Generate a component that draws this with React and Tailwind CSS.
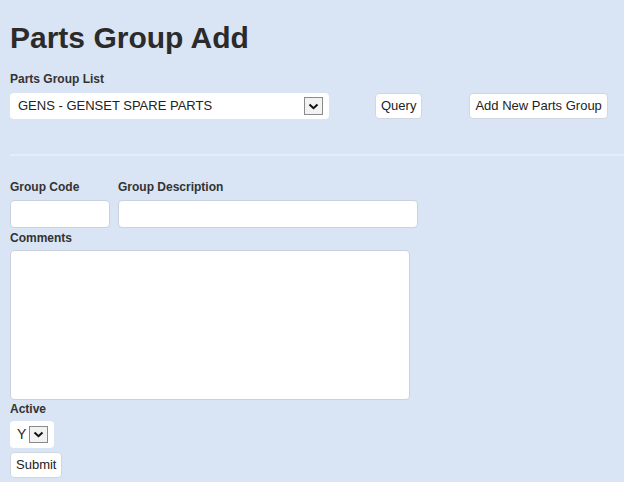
import React from "react";

function Arrow({ className }) {
  return (
    <span className={"inline-flex items-center justify-center border border-[#8a8a8a] bg-[#f2f2f2] " + className}>
      <svg width="11" height="7" viewBox="0 0 11 7">
        <path d="M1.5 1.5 L5.5 5.2 L9.5 1.5" fill="none" stroke="#111" strokeWidth="2" />
      </svg>
    </span>
  );
}

export default function App() {
  return (
    <div className="min-h-[482px] w-[624px] bg-[#d9e4f4] text-[#333] font-['Liberation_Sans',Arial,sans-serif] px-[10px] pt-[18px] overflow-hidden">
      <h1 className="text-[30px] font-bold leading-[40px] text-[#2b2b2b]">Parts Group Add</h1>
      <div className="mt-[14px] text-[12px] font-bold leading-[14px]">Parts Group List</div>
      <div className="mt-[7px] flex items-center h-[26px]">
        <div className="w-[319px] h-[26px] bg-white rounded-[4px] flex items-center pl-[8px] pr-[6px] justify-between">
          <span className="text-[13px] text-[#222]">GENS - GENSET SPARE PARTS</span>
          <Arrow className="w-[19px] h-[18px]" />
        </div>
        <button className="ml-[46px] h-[26px] px-[5px] bg-white rounded-[4px] border border-[#d0d7e0] text-[13px] text-[#222]">Query</button>
        <button className="ml-[47px] h-[26px] px-[5px] bg-white rounded-[4px] border border-[#d0d7e0] text-[13px] text-[#222]">Add New Parts Group</button>
      </div>
      <div className="mt-[35px] -mr-[10px] h-[2px] bg-[#e6edf8]" />
      <div className="mt-[24px] flex gap-[8px]">
        <div className="w-[100px]">
          <div className="text-[12px] font-bold leading-[14px]">Group Code</div>
          <div className="mt-[6px] h-[28px] bg-white rounded-[4px] border border-[#c9d1dc]" />
        </div>
        <div className="w-[300px]">
          <div className="text-[12px] font-bold leading-[14px]">Group Description</div>
          <div className="mt-[6px] h-[28px] bg-white rounded-[4px] border border-[#c9d1dc]" />
        </div>
      </div>
      <div className="mt-[3px] text-[12px] font-bold leading-[14px]">Comments</div>
      <div className="mt-[5px] w-[400px] h-[150px] bg-white rounded-[4px] border border-[#c9d1dc]" />
      <div className="mt-[2px] text-[12px] font-bold leading-[14px]">Active</div>
      <div className="mt-[5px] w-[44px] h-[27px] bg-white rounded-[4px] flex items-center pl-[7px]">
        <span className="text-[14px] text-[#222]">Y</span>
        <Arrow className="ml-[3px] w-[19px] h-[17px]" />
      </div>
      <button className="mt-[4px] h-[26px] px-[5px] bg-white rounded-[4px] border border-[#d0d7e0] text-[13px] text-[#222]">Submit</button>
    </div>
  );
}
